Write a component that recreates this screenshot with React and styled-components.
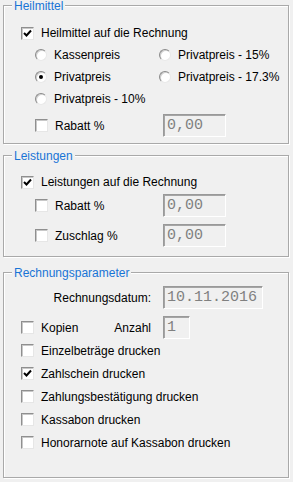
import styled, { createGlobalStyle } from "styled-components";

const Global = createGlobalStyle`
  html, body {
    margin: 0;
    padding: 0;
    background: #f0f0f0;
  }
  body {
    font-family: "Liberation Sans", Arial, sans-serif;
    font-size: 12px;
    color: #000;
  }
`;

const Page = styled.div`
  width: 293px;
  min-height: 482px;
  box-sizing: border-box;
  padding: 5px 0 0 3px;
  background: #f0f0f0;
`;

const Group = styled.div`
  position: relative;
  box-sizing: border-box;
  width: 286px;
  margin-top: ${(p) => p.$top || 0}px;
  padding: ${(p) => p.$pad};
  border: 1px solid #a9a9a9;
  box-shadow: 1px 1px 0 #fff, inset 1px 1px 0 #fff;
`;

const Title = styled.span`
  position: absolute;
  top: -7px;
  left: 8px;
  padding: 0 2px;
  line-height: 14px;
  background: #f0f0f0;
  color: #1874d6;
`;

const Row = styled.div`
  display: flex;
  align-items: center;
  height: ${(p) => p.$h || 22}px;
  padding-left: ${(p) => p.$indent || 0}px;
  margin-top: ${(p) => p.$gap || 0}px;
`;

const RadioGrid = styled.div`
  display: grid;
  grid-template-columns: 124px auto;
  grid-auto-rows: 22px;
  padding-left: 14px;
`;

const Field = styled.div`
  display: grid;
  grid-template-columns: 142px auto;
  align-items: center;
  height: ${(p) => p.$h || 23}px;
  margin-top: ${(p) => p.$gap || 0}px;
`;

const FieldLabel = styled.div`
  display: flex;
  align-items: center;
  justify-content: ${(p) => (p.$right ? "flex-end" : "flex-start")};
  padding-left: ${(p) => p.$indent || 0}px;
  padding-right: ${(p) => (p.$right ? 12 : 0)}px;
`;

const Spacer = styled.span`
  flex: 1;
`;

const Box = styled.span`
  display: inline-flex;
  align-items: center;
  justify-content: center;
  box-sizing: border-box;
  width: 13px;
  height: 13px;
  flex: none;
  background: #fff;
  border: 1px solid;
  border-color: #8f8f8f #e6e6e6 #e6e6e6 #8f8f8f;
  box-shadow: inset 1px 1px 0 #c8c8c8;
`;

const Radio = styled.span`
  display: inline-flex;
  align-items: center;
  justify-content: center;
  box-sizing: border-box;
  width: 12px;
  height: 12px;
  flex: none;
  border-radius: 50%;
  background: #fff;
  border: 1px solid;
  border-color: #8a8a8a #e8e8e8 #e8e8e8 #8a8a8a;
  box-shadow: inset 1px 1px 0 #d0d0d0;
`;

const Dot = styled.span`
  width: 4px;
  height: 4px;
  border-radius: 50%;
  background: #000;
`;

const Label = styled.span`
  margin-left: 7px;
  white-space: nowrap;
  line-height: 14px;
`;

const Input = styled.div`
  box-sizing: border-box;
  width: ${(p) => p.$w}px;
  height: 23px;
  padding: 2px 0 0 3px;
  border: 1px solid;
  border-color: #999 #fff #fff #999;
  box-shadow: inset 1px 1px 0 #a5a5a5;
  background: #f0f0f0;
  color: #808080;
  font-family: "Liberation Mono", "Courier New", monospace;
  font-size: 15px;
  line-height: 17px;
  white-space: nowrap;
`;

function Tick() {
  return (
    <svg width="9" height="9" viewBox="0 0 9 9">
      <path d="M1 4 L3.5 6.5 L8 1.5" fill="none" stroke="#000" strokeWidth="2" />
    </svg>
  );
}

function Check({ checked, children }) {
  return (
    <>
      <Box>{checked && <Tick />}</Box>
      <Label>{children}</Label>
    </>
  );
}

function RadioItem({ checked, children }) {
  return (
    <Row>
      <Radio>{checked && <Dot />}</Radio>
      <Label>{children}</Label>
    </Row>
  );
}

export default function App() {
  return (
    <Page>
      <Global />
      <Group $pad="16px 0 6px 17px">
        <Title>Heilmittel</Title>
        <Row>
          <Check checked>Heilmittel auf die Rechnung</Check>
        </Row>
        <RadioGrid>
          <RadioItem>Kassenpreis</RadioItem>
          <RadioItem>Privatpreis - 15%</RadioItem>
          <RadioItem checked>Privatpreis</RadioItem>
          <RadioItem>Privatpreis - 17.3%</RadioItem>
          <RadioItem>Privatpreis - 10%</RadioItem>
        </RadioGrid>
        <Field $gap={4}>
          <FieldLabel $indent={14}>
            <Check>Rabatt %</Check>
          </FieldLabel>
          <Input $w={63}>0,00</Input>
        </Field>
      </Group>

      <Group $top={11} $pad="15px 0 9px 17px">
        <Title>Leistungen</Title>
        <Row>
          <Check checked>Leistungen auf die Rechnung</Check>
        </Row>
        <Field $gap={1}>
          <FieldLabel $indent={14}>
            <Check>Rabatt %</Check>
          </FieldLabel>
          <Input $w={63}>0,00</Input>
        </Field>
        <Field $gap={7}>
          <FieldLabel $indent={14}>
            <Check>Zuschlag %</Check>
          </FieldLabel>
          <Input $w={63}>0,00</Input>
        </Field>
      </Group>

      <Group $top={15} $pad="13px 0 23px 17px">
        <Title>Rechnungsparameter</Title>
        <Field>
          <FieldLabel $right>Rechnungsdatum:</FieldLabel>
          <Input $w={100}>10.11.2016</Input>
        </Field>
        <Field $gap={7}>
          <FieldLabel>
            <Check>Kopien</Check>
            <Spacer />
            <span style={{ paddingRight: 12 }}>Anzahl</span>
          </FieldLabel>
          <Input $w={27}>1</Input>
        </Field>
        <Row $h={23}>
          <Check>Einzelbeträge drucken</Check>
        </Row>
        <Row $h={23}>
          <Check checked>Zahlschein drucken</Check>
        </Row>
        <Row $h={23}>
          <Check>Zahlungsbestätigung drucken</Check>
        </Row>
        <Row $h={23}>
          <Check>Kassabon drucken</Check>
        </Row>
        <Row $h={23}>
          <Check>Honorarnote auf Kassabon drucken</Check>
        </Row>
      </Group>
    </Page>
  );
}
